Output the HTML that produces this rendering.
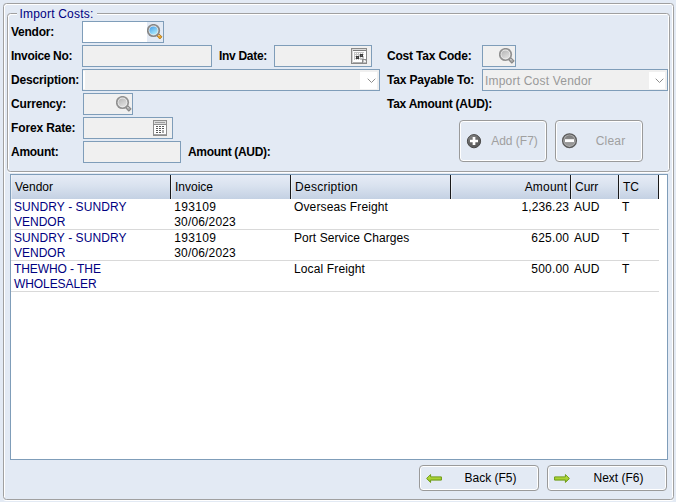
<!DOCTYPE html>
<html><head><meta charset="utf-8">
<style>
*{box-sizing:border-box;margin:0;padding:0}
html,body{width:676px;height:502px;overflow:hidden;background:#e3eaf4;font-family:"Liberation Sans",sans-serif;font-size:12px;color:#000}
.grp{position:absolute;border:1px solid #a0a0a0;border-radius:3.5px;box-shadow:inset 1px 1px 0 #fff,inset -1px 0 0 #fff,0 1px 0 #fff}
#legend{position:absolute;left:17px;top:7px;height:14px;width:80px;padding:0 0 0 2.5px;background:#e3eaf4;color:#000080;font-size:12px;line-height:14px;letter-spacing:.2px;white-space:nowrap}
.lb{position:absolute;font-weight:bold;font-size:12px;line-height:22px;height:22px;white-space:nowrap}
.in{position:absolute;border:1px solid #7f9db9;background:#f0f0f0;height:22px}
.ic{position:absolute;width:16px;height:16px;display:block}
.cb{position:absolute;border:1px solid #7f9db9;background:#f0f0f0;height:22px;color:#a0a0a0;font-size:12px;line-height:22px;letter-spacing:.2px;white-space:nowrap}
.cb i{position:absolute;right:2px;top:2px;width:16px;height:17px;background:#fff}
.cb svg{position:absolute;right:3px;top:8px}
.btn{position:absolute;border:1px solid #9a9a9a;border-radius:4px;box-shadow:inset 0 0 0 1px #fff;font-size:12px;white-space:nowrap}
.btn span{position:absolute;left:27px;right:4px;top:-1px;bottom:-1px;text-align:center}
.dis{color:#a0a0a0}
#tbl{position:absolute;left:10px;top:174px;width:658px;height:286px;background:#fff;border:1px solid #7f9db9}
#hdr{position:absolute;left:0;top:0;width:648px;height:24px;background:linear-gradient(#e6ecf6,#d9e2ef 45%,#c4d1e3)}
.th{position:absolute;top:0;height:24px;border-right:1px solid #1a1a1a;font-size:12px;line-height:24px;padding-left:4px;white-space:nowrap}
.th:before{content:"";position:absolute;left:0;top:0;width:1px;height:24px;background:rgba(255,255,255,.45)}
.td{position:absolute;font-size:12px;line-height:15px;white-space:nowrap}
.v{color:#000080}
.rl{position:absolute;left:0;width:648px;height:1px;background:#d9d9d9}
</style></head><body>
<div class="grp" style="left:3px;top:3px;width:671px;height:497px"></div>
<div class="grp" style="left:7px;top:13px;width:663px;height:159px"></div>
<div id="legend">Import Costs:</div>

<div class="lb" style="left:11px;top:21px;letter-spacing:-.25px">Vendor:</div>
<div class="lb" style="left:11px;top:45px;letter-spacing:-.32px">Invoice No:</div>
<div class="lb" style="left:11px;top:69px;letter-spacing:-.15px">Description:</div>
<div class="lb" style="left:11px;top:93px;letter-spacing:-.17px">Currency:</div>
<div class="lb" style="left:11px;top:117px;letter-spacing:-.14px">Forex Rate:</div>
<div class="lb" style="left:11px;top:141px;letter-spacing:-.27px">Amount:</div>
<div class="lb" style="left:188px;top:141px;letter-spacing:-.33px">Amount (AUD):</div>
<div class="lb" style="left:219px;top:45px;letter-spacing:-.3px">Inv Date:</div>
<div class="lb" style="left:387px;top:45px;letter-spacing:-.19px">Cost Tax Code:</div>
<div class="lb" style="left:387px;top:69px;letter-spacing:-.16px">Tax Payable To:</div>
<div class="lb" style="left:387px;top:93px;letter-spacing:-.25px">Tax Amount (AUD):</div>

<!-- inputs -->
<div class="in" style="left:82px;top:21px;width:82px;background:linear-gradient(90deg,#fff 64px,#e3eaf4 64px)"></div>
<div class="in" style="left:82px;top:45px;width:130px"></div>
<div class="in" style="left:274px;top:45px;width:98px"></div>
<div class="cb" style="left:82px;top:69px;width:298px"><b style="position:absolute;left:0;top:1px;width:2px;height:18px;background:#fff"></b><i style="width:17px"></i><svg width="9" height="5" viewBox="0 0 9 5"><path d="M0.7 0.7L4.5 4.5L8.3 0.7" fill="none" stroke="#8e8e8e" stroke-width="1"/></svg></div>
<div class="in" style="left:83px;top:93px;width:50px"></div>
<div class="in" style="left:83px;top:117px;width:90px"></div>
<div class="in" style="left:83px;top:141px;width:98px"></div>
<div class="in" style="left:482px;top:45px;width:34px"></div>
<div class="cb" style="left:482px;top:69px;width:186px;padding-left:2px;line-height:22px;color:#999"><i></i><svg width="9" height="5" viewBox="0 0 9 5"><path d="M0.7 0.7L4.5 4.5L8.3 0.7" fill="none" stroke="#8e8e8e" stroke-width="1"/></svg>Import Cost Vendor</div>

<!-- icons -->
<svg class="ic" style="left:147px;top:24px" viewBox="0 0 16 16">
 <defs><linearGradient id="gb" x1="0.2" y1="0" x2="0.8" y2="1"><stop offset="0" stop-color="#4aa2ea"/><stop offset="1" stop-color="#b4f0fc"/></linearGradient>
 <linearGradient id="gg" x1="0.2" y1="0" x2="0.8" y2="1"><stop offset="0" stop-color="#b8b8b8"/><stop offset="1" stop-color="#e2e2e2"/></linearGradient></defs>
 <path d="M9.6 11.6L11.6 9.6L15 12.8L12.8 15Z" fill="#eaa42a" stroke="#b07a1e" stroke-width=".9" stroke-linejoin="round"/>
 <path d="M10.8 11.6L11.8 10.8L13 12Z" fill="#fff" opacity=".8"/>
 <circle cx="6.5" cy="6.5" r="6.6" fill="#868686"/>
 <circle cx="6.5" cy="6.5" r="4.9" fill="#e8e8e8"/>
 <circle cx="6.5" cy="6.5" r="4.1" fill="url(#gb)"/>
</svg>
<svg class="ic" style="left:116px;top:96px" viewBox="0 0 16 16">
 <path d="M9.6 11.6L11.6 9.6L15 12.8L12.8 15Z" fill="#b0b0b0" stroke="#888" stroke-width="1.1" stroke-linejoin="round"/>
 <path d="M10.8 11.6L11.8 10.8L13 12Z" fill="#fff" opacity=".7"/>
 <circle cx="6.5" cy="6.5" r="6.6" fill="#909090"/>
 <circle cx="6.5" cy="6.5" r="4.9" fill="#eeeeee"/>
 <circle cx="6.5" cy="6.5" r="4.1" fill="url(#gg)"/>
</svg>
<svg class="ic" style="left:499px;top:48px" viewBox="0 0 16 16">
 <path d="M9.6 11.6L11.6 9.6L15 12.8L12.8 15Z" fill="#b0b0b0" stroke="#888" stroke-width="1.1" stroke-linejoin="round"/>
 <path d="M10.8 11.6L11.8 10.8L13 12Z" fill="#fff" opacity=".7"/>
 <circle cx="6.5" cy="6.5" r="6.6" fill="#909090"/>
 <circle cx="6.5" cy="6.5" r="4.9" fill="#eeeeee"/>
 <circle cx="6.5" cy="6.5" r="4.1" fill="url(#gg)"/>
</svg>
<!-- calendar -->
<svg class="ic" style="left:351px;top:48px" viewBox="0 0 16 16" shape-rendering="crispEdges">
 <rect x="0" y="0" width="16" height="16" fill="#8a8a8a"/>
 <rect x="1" y="1" width="14" height="14" fill="#fff"/>
 <rect x="1" y="1" width="14" height="1" fill="#dcdcdc"/>
 <rect x="1" y="2" width="14" height="1" fill="#7a7a7a"/>
 <rect x="1" y="14" width="14" height="1" fill="#b0b0b0"/>
 <rect x="3" y="4" width="10" height="8" fill="#c4c4c4"/>
 <g fill="#fff"><rect x="4" y="5" width="1" height="1"/><rect x="6" y="5" width="1" height="1"/><rect x="8" y="5" width="1" height="1"/><rect x="10" y="5" width="1" height="1"/><rect x="12" y="5" width="1" height="1"/>
 <rect x="4" y="7" width="1" height="1"/><rect x="6" y="7" width="1" height="1"/><rect x="12" y="7" width="1" height="1"/>
 <rect x="4" y="9" width="1" height="1"/><rect x="8" y="9" width="1" height="1"/><rect x="10" y="9" width="1" height="1"/>
 <rect x="4" y="11" width="1" height="1"/><rect x="6" y="11" width="1" height="1"/><rect x="8" y="11" width="1" height="1"/></g>
 <rect x="9" y="6" width="3" height="3" fill="#3c3c3c"/><rect x="10" y="7" width="1" height="1" fill="#6a6a6a"/>
 <rect x="5" y="8" width="3" height="3" fill="#3c3c3c"/><rect x="6" y="9" width="1" height="1" fill="#6a6a6a"/>
 <rect x="11" y="11" width="4" height="1" fill="#8a8a8a"/><rect x="11" y="11" width="1" height="4" fill="#8a8a8a"/>
 <rect x="12" y="12" width="3" height="3" fill="#c0c0c0"/><rect x="13" y="13" width="2" height="1" fill="#f6f6f6"/><rect x="13" y="12" width="1" height="1" fill="#f0f0f0"/>
 <rect x="1" y="1" width="1" height="14" fill="#d4d4d4"/>
</svg>
<!-- calculator -->
<svg class="ic" style="left:153px;top:120px;width:14px" viewBox="0 0 14 16" shape-rendering="crispEdges">
 <rect x="0" y="0" width="14" height="16" fill="#8e8e8e"/>
 <rect x="1" y="1" width="12" height="3" fill="#dedede"/>
 <rect x="2" y="2" width="10" height="1" fill="#9c9c9c"/>
 <rect x="1" y="5" width="12" height="9" fill="#fff"/>
 <rect x="1" y="14" width="12" height="1" fill="#a4a4a4"/>
 <g fill="#5a5a5a">
 <rect x="3" y="6" width="2" height="1"/><rect x="6" y="6" width="2" height="1"/><rect x="9" y="6" width="2" height="1"/>
 <rect x="3" y="8" width="2" height="1"/><rect x="6" y="8" width="2" height="1"/><rect x="9" y="8" width="2" height="1"/>
 <rect x="3" y="10" width="2" height="1"/><rect x="6" y="10" width="2" height="1"/>
 <rect x="3" y="12" width="2" height="1"/><rect x="6" y="12" width="2" height="1"/></g>
 <rect x="9" y="10" width="2" height="3" fill="#a8a8a8"/>
</svg>

<!-- Add / Clear -->
<div class="btn dis" style="left:459px;top:120px;width:88px;height:42px;line-height:42px"><span>Add (F7)</span></div>
<div class="btn dis" style="left:555px;top:120px;width:88px;height:42px;line-height:42px"><span style="letter-spacing:.2px">Clear</span></div>
<svg class="ic" style="left:466px;top:133px;overflow:visible" viewBox="0 0 16 16">
 <defs><linearGradient id="gp" x1="0.2" y1="0" x2="0.7" y2="1"><stop offset="0" stop-color="#8a8a8a"/><stop offset=".5" stop-color="#666"/><stop offset="1" stop-color="#585858"/></linearGradient>
 <linearGradient id="gm" x1="0" y1="0" x2="0" y2="1"><stop offset="0" stop-color="#7c7c7c"/><stop offset="1" stop-color="#a0a0a0"/></linearGradient></defs>
 <circle cx="8" cy="8.2" r="6.6" fill="url(#gp)" stroke="#484848" stroke-width="1"/>
 <path d="M8 4V12M4 8H12" stroke="#fff" stroke-width="2.7"/>
</svg>
<svg class="ic" style="left:562px;top:133px;overflow:visible" viewBox="0 0 16 16">
 <circle cx="7.5" cy="7.7" r="6.9" fill="#b2b2b2" stroke="#5c5c5c" stroke-width="1.3"/>
 <circle cx="7.5" cy="7.7" r="5.4" fill="url(#gm)"/>
 <rect x="3" y="6.2" width="9" height="2.9" fill="#fff"/>
</svg>

<!-- table -->
<div id="tbl">
 <div id="hdr"></div>
 <div class="th" style="left:0;width:160px">Vendor</div>
 <div class="th" style="left:160px;width:120px">Invoice</div>
 <div class="th" style="left:280px;width:160px;letter-spacing:.27px">Description</div>
 <div class="th" style="left:440px;width:120px;text-align:right;padding-right:2.8px;letter-spacing:.2px">Amount</div>
 <div class="th" style="left:560px;width:48px">Curr</div>
 <div class="th" style="left:608px;width:40px">TC</div>

 <div class="td v" style="left:3px;top:25px"><span style="letter-spacing:.08px">SUNDRY - SUNDRY</span><br>VENDOR</div>
 <div class="td" style="left:163.3px;top:25px;letter-spacing:.15px"><span style="letter-spacing:.3px">193109</span><br>30/06/2023</div>
 <div class="td" style="left:283px;top:25px;letter-spacing:.125px">Overseas Freight</div>
 <div class="td" style="left:440px;width:118.12px;text-align:right;top:25px;letter-spacing:.12px">1,236.23</div>
 <div class="td" style="left:563px;top:25px">AUD</div>
 <div class="td" style="left:611px;top:25px">T</div>
 <div class="rl" style="top:54px"></div>

 <div class="td v" style="left:3px;top:56px"><span style="letter-spacing:.08px">SUNDRY - SUNDRY</span><br>VENDOR</div>
 <div class="td" style="left:163.3px;top:56px;letter-spacing:.15px"><span style="letter-spacing:.3px">193109</span><br>30/06/2023</div>
 <div class="td" style="left:283px;top:56px;letter-spacing:.06px">Port Service Charges</div>
 <div class="td" style="left:440px;width:118.2px;text-align:right;top:56px;letter-spacing:.2px">625.00</div>
 <div class="td" style="left:563px;top:56px">AUD</div>
 <div class="td" style="left:611px;top:56px">T</div>
 <div class="rl" style="top:85px"></div>

 <div class="td v" style="left:3px;top:87px;letter-spacing:-.08px">THEWHO - THE<br>WHOLESALER</div>
 <div class="td" style="left:283px;top:87px;letter-spacing:.13px">Local Freight</div>
 <div class="td" style="left:440px;width:118.2px;text-align:right;top:87px;letter-spacing:.2px">500.00</div>
 <div class="td" style="left:563px;top:87px">AUD</div>
 <div class="td" style="left:611px;top:87px">T</div>
 <div class="rl" style="top:116px"></div>
</div>

<!-- Back / Next -->
<div class="btn" style="left:419px;top:465px;width:120px;height:26px;line-height:26px"><span>Back (F5)</span></div>
<div class="btn" style="left:547px;top:465px;width:120px;height:26px;line-height:26px"><span>Next (F6)</span></div>
<svg class="ic" style="left:426px;top:470px" viewBox="0 0 16 16">
 <defs><linearGradient id="ga" x1="0" y1="0" x2="0" y2="1"><stop offset="0" stop-color="#c8e850"/><stop offset="1" stop-color="#8cbc18"/></linearGradient></defs>
 <path d="M0.6 8.5L4.6 4.6V6.9H15.4V10.1H4.6V12.4Z" fill="url(#ga)" stroke="#6c9a14" stroke-width="1" stroke-linejoin="round"/>
</svg>
<svg class="ic" style="left:554px;top:470px" viewBox="0 0 16 16">
 <path d="M15.4 8.5L11.4 4.6V6.9H0.6V10.1H11.4V12.4Z" fill="url(#ga)" stroke="#6c9a14" stroke-width="1" stroke-linejoin="round"/>
</svg>
</body></html>
